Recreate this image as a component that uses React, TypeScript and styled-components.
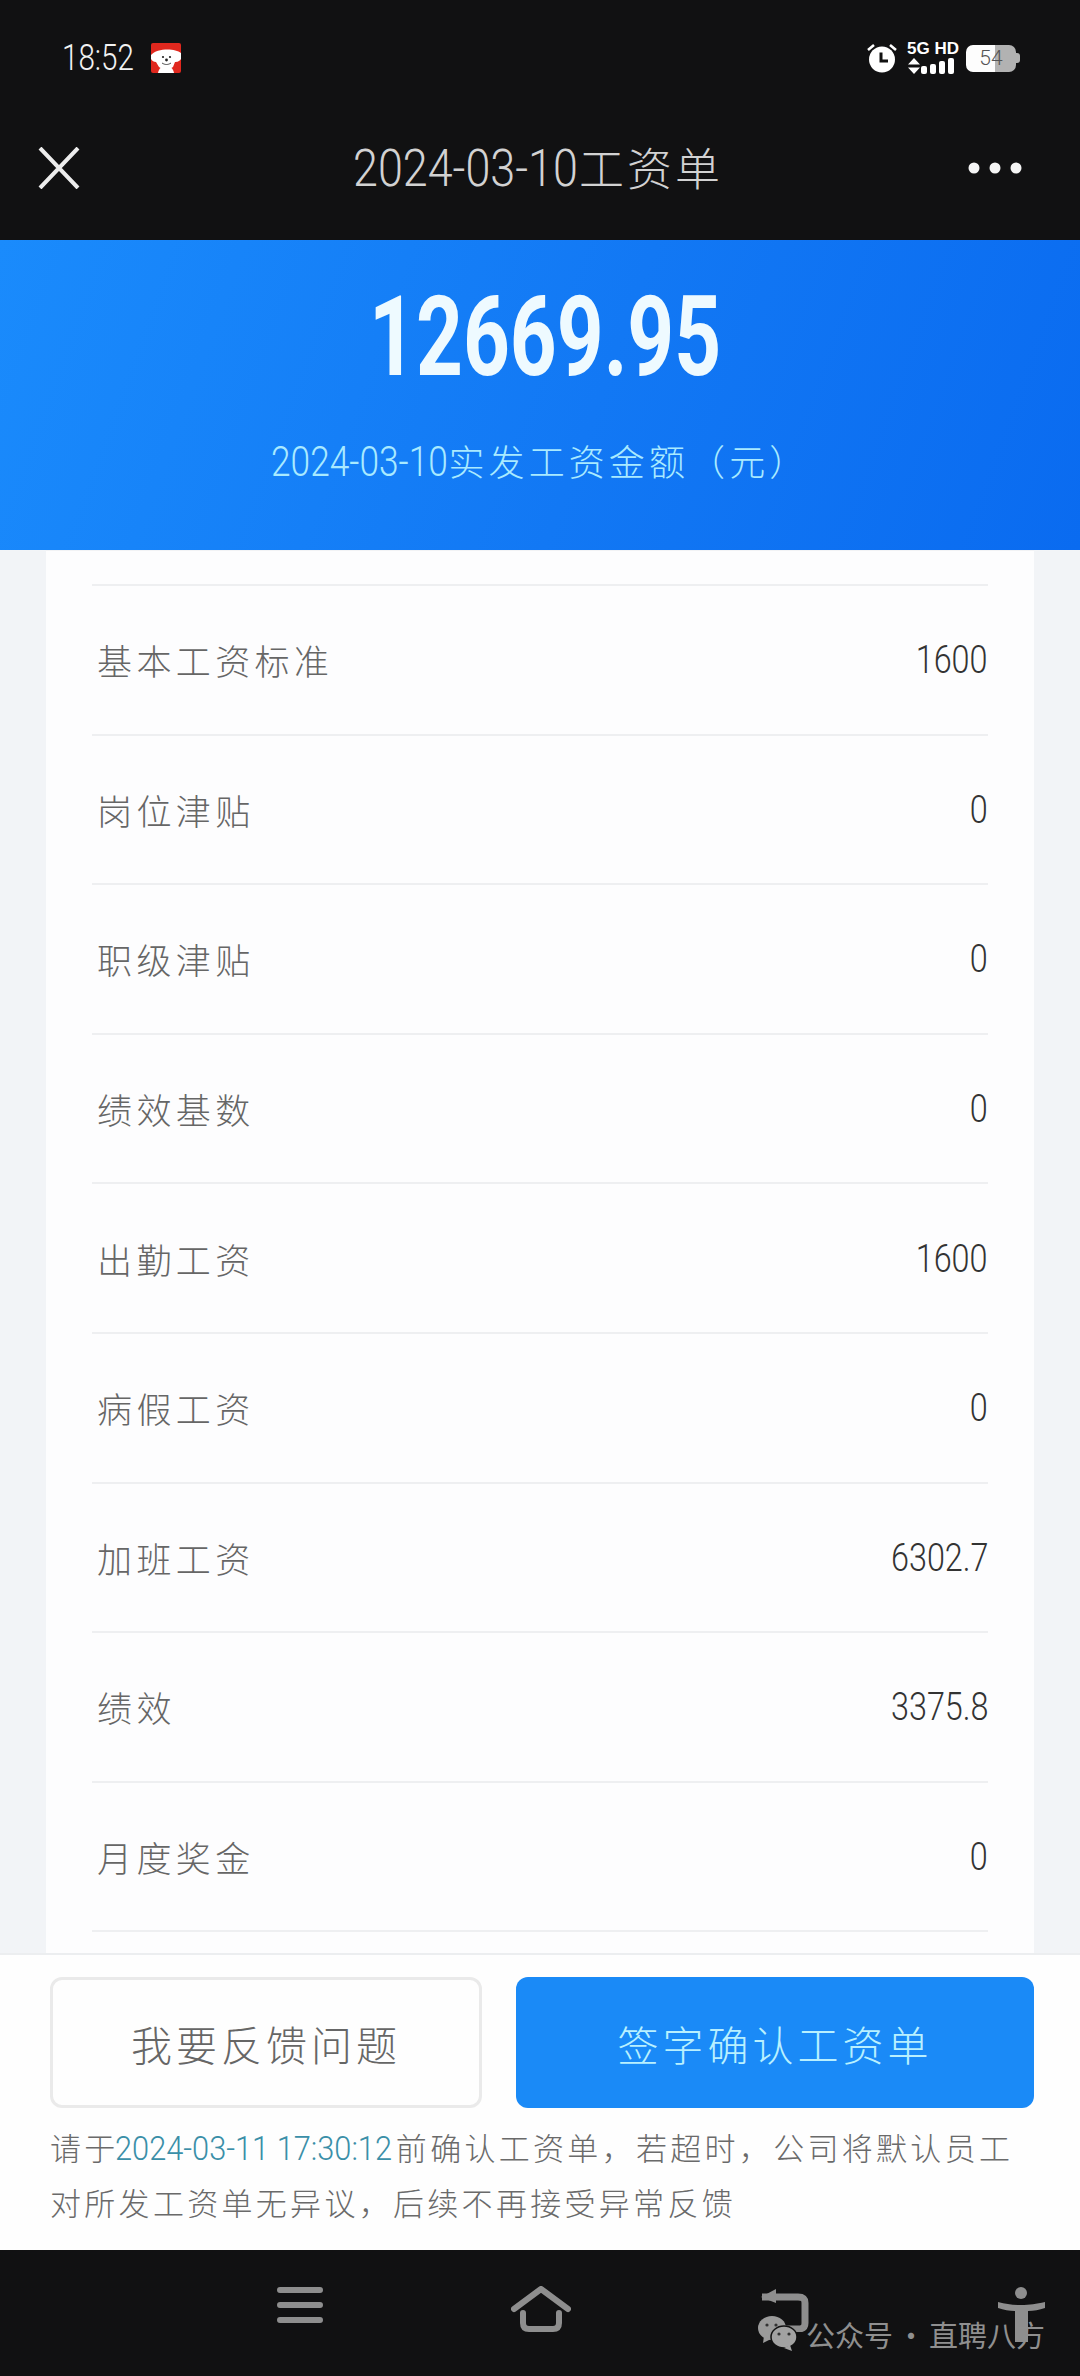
import React from "react";
import styled, { createGlobalStyle } from "styled-components";

const Global = createGlobalStyle`
  html, body { margin: 0; padding: 0; background: #111; }
  * { box-sizing: border-box; }
`;

const CJK = `"Noto Sans CJK SC", "Noto Sans", sans-serif`;
const NUM = `Roboto, "Liberation Sans", sans-serif`;

const Phone = styled.div`
  width: 1080px;
  height: 2376px;
  display: flex;
  flex-direction: column;
  overflow: hidden;
  position: relative;
  font-family: ${CJK};
  font-weight: 300;
  background: #f2f4f7;
`;

const TopArea = styled.header`
  height: 240px;
  flex: none;
  background: #111112;
  display: flex;
  flex-direction: column;
`;

const StatusBar = styled.div`
  height: 116px;
  padding: 43px 60px 0 62px;
  display: flex;
  justify-content: space-between;
  align-items: flex-start;
`;

const StatusLeft = styled.div`
  display: flex;
  align-items: center;
  gap: 15px;
  height: 30px;
`;

/* Digits of the reference are much narrower than any installed face: squeeze them,
   and give the box the squeezed width ($em = natural width in em × scale). */
const Narrow = styled.span<{ $scale: number; $em: number }>`
  display: inline-block;
  font-family: ${NUM};
  font-weight: 300;
  white-space: nowrap;
  width: ${(p) => p.$em * p.$scale}em;
  transform: scaleX(${(p) => p.$scale});
  transform-origin: left center;
`;

const Time = styled(Narrow)`
  font-size: 37px;
  line-height: 30px;
  color: #f2f2f2;
`;

const StatusRight = styled.div`
  display: flex;
  align-items: center;
  height: 30px;
  gap: 9px;
`;

const NetStack = styled.div`
  width: 50px;
  display: flex;
  flex-direction: column;
  gap: 2px;
  margin-top: -2px;
`;

const NetText = styled.span`
  font-family: "Liberation Sans", sans-serif;
  font-weight: 700;
  font-size: 17px;
  line-height: 15px;
  color: #fff;
  white-space: nowrap;
`;

const Battery = styled.div`
  width: 54px;
  height: 27px;
  display: flex;
  align-items: center;
  position: relative;
`;

const BatteryBody = styled.div`
  width: 50px;
  height: 27px;
  border-radius: 7px;
  background: linear-gradient(90deg, #fdfdfd 0 58%, #b2b2b2 58% 100%);
  color: #555;
  font-family: ${NUM};
  font-weight: 300;
  font-size: 21px;
  line-height: 27px;
  text-align: center;
`;

const BatteryTip = styled.div`
  width: 4px;
  height: 10px;
  border-radius: 0 3px 3px 0;
  background: #b2b2b2;
`;

const NavBar = styled.div`
  flex: 1;
  display: flex;
  align-items: flex-start;
  justify-content: space-between;
  padding: 30px 58px 0 38px;
`;

const NavTitle = styled.h1`
  margin: -4px 0 0 28px;
  font-weight: 300;
  font-size: 45px;
  line-height: 50px;
  letter-spacing: 3px;
  color: #d2d2d2;
  white-space: nowrap;
`;

const TitleDate = styled(Narrow)`
  font-size: 51px;
  letter-spacing: 0;
`;

const Hero = styled.section`
  height: 310px;
  flex: none;
  background: linear-gradient(110deg, #1a8bfc 0%, #1278f4 55%, #0a6bf0 100%);
  display: flex;
  flex-direction: column;
  align-items: center;
`;

const Amount = styled.div`
  margin: 40px 0 0 10px;
  font-family: ${NUM};
  font-weight: 700;
  font-size: 112px;
  line-height: 114px;
  color: #eefaff;
  transform: scaleX(0.73);
`;

const HeroSub = styled.div`
  margin-top: 41px;
  font-size: 36px;
  line-height: 50px;
  letter-spacing: 4.1px;
  color: #a9eaff;
  white-space: nowrap;
`;

const HeroDate = styled(Narrow)`
  font-size: 42px;
  letter-spacing: 0;
`;

const Body = styled.main`
  flex: 1;
  min-height: 0;
  padding: 0 46px;
`;

const Card = styled.div`
  height: 100%;
  background: #fdfdfe;
  padding: 33px 46px 0 46px;
  display: flex;
  flex-direction: column;
  border-top: 1px solid #f2f3f5;
`;

const Row = styled.div`
  height: 149.6px;
  flex: none;
  display: flex;
  align-items: center;
  justify-content: space-between;
  border-top: 2px solid #eeeff1;
  padding: 0 0 0 5px;
  &:last-child {
    border-bottom: 2px solid #eeeff1;
    height: 151px;
  }
`;

const RowLabel = styled.span`
  font-size: 35px;
  letter-spacing: 4.4px;
  color: #666;
`;

const RowValue = styled.span`
  display: inline-block;
  font-family: ${NUM};
  font-weight: 300;
  font-size: 39px;
  color: #333;
  margin-top: 1px;
  transform: scaleX(0.83);
  transform-origin: right center;
`;

const Footer = styled.footer`
  height: 297px;
  flex: none;
  background: #fefefe;
  border-top: 2px solid #eceef0;
  padding: 22px 46px 0 50px;
`;

const ButtonRow = styled.div`
  display: flex;
  gap: 34px;
  height: 131px;
`;

const Button = styled.button<{ $primary?: boolean }>`
  border-radius: 12px;
  padding: 0;
  font-family: ${CJK};
  font-weight: 300;
  font-size: 41px;
  letter-spacing: 4px;
  cursor: pointer;
  background: ${(p) => (p.$primary ? "#1a8af7" : "#fefefe")};
  color: ${(p) => (p.$primary ? "#b8f0ff" : "#666")};
  border: ${(p) => (p.$primary ? "none" : "3px solid #eaeaea")};
  width: ${(p) => (p.$primary ? "518px" : "432px")};
`;

const Notice = styled.p`
  margin: 12px 0 0;
  font-size: 31px;
  line-height: 53px;
  letter-spacing: 3.3px;
  color: #6a6a6a;
  white-space: nowrap;
`;

const NoticeDate = styled(Narrow)`
  margin-left: -4px;
  font-size: 34px;
  letter-spacing: 0;
  color: #3a8fa8;
`;

const BottomBar = styled.nav`
  height: 126px;
  flex: none;
  background: #111112;
  display: flex;
  align-items: flex-start;
  padding: 38px 33px 0 277px;
  justify-content: space-between;
`;

const Watermark = styled.div`
  position: absolute;
  left: 757px;
  top: 2316px;
  display: flex;
  align-items: center;
  gap: 7px;
  color: #8f8f8f;
  font-size: 29px;
  line-height: 34px;
  font-weight: 400;
  word-spacing: -3px;
  white-space: nowrap;
`;

const Mascot = () => (
  <svg width="30" height="30" viewBox="0 0 30 30">
    <rect width="30" height="30" rx="2" fill="#e0281e" />
    <path d="M0 12c6-7 24-7 30-2v6c-2 3-5 3-6 3l-2 5c-4 3-10 3-14 0l-3-5c-2 0-4-1-5-3z" fill="#fff" />
    <path d="M7 30c1-5 4-7 8-7s7 2 8 7z" fill="#fff" />
    <circle cx="12" cy="14" r="1.1" fill="#222" />
    <circle cx="19" cy="14" r="1.1" fill="#222" />
    <circle cx="15.5" cy="17" r="1.4" fill="#222" />
    <path d="M11 20c3 2 6 2 9 0" stroke="#222" strokeWidth="0.8" fill="none" />
  </svg>
);

const Alarm = () => (
  <svg width="32" height="30" viewBox="0 0 32 30">
    <circle cx="16" cy="16.5" r="13" fill="#fff" />
    <path d="M2 7l6-5M30 7l-6-5" stroke="#fff" strokeWidth="2.6" />
    <path d="M15 9.5v8.5h7" stroke="#111" strokeWidth="3" fill="none" />
  </svg>
);

const Signal = () => (
  <svg width="50" height="16" viewBox="0 0 50 16">
    <path d="M1 6.5L7 0l6 6.5zM1 9.5L7 16l6-6.5z" fill="#fff" />
    <rect x="14" y="8" width="6" height="8" rx="2" fill="#fff" />
    <rect x="23" y="6" width="6" height="10" rx="2" fill="#fff" />
    <rect x="32" y="3" width="6" height="13" rx="2" fill="#fff" />
    <rect x="41" y="0" width="6" height="16" rx="2" fill="#fff" />
  </svg>
);

const CloseIcon = () => (
  <svg width="42" height="42" viewBox="0 0 42 42" style={{ marginTop: 1 }}>
    <path d="M2 1l38 40M40 1L2 41" stroke="#ededed" strokeWidth="4" fill="none" />
  </svg>
);

const DotsIcon = () => (
  <svg width="54" height="12" viewBox="0 0 54 12" style={{ marginTop: 16 }}>
    <circle cx="6" cy="6" r="5.5" fill="#f5f5f5" />
    <circle cx="27" cy="6" r="5.5" fill="#f5f5f5" />
    <circle cx="48" cy="6" r="5.5" fill="#f5f5f5" />
  </svg>
);

const MenuIcon = () => (
  <svg width="46" height="38" viewBox="0 0 46 38" style={{ marginTop: -2 }}>
    <path d="M3 4h40M3 19h40M3 34h40" stroke="#8e8e8e" strokeWidth="6" strokeLinecap="round" />
  </svg>
);

const HomeIcon = () => (
  <svg width="60" height="46" viewBox="0 0 60 46" style={{ marginTop: -2 }}>
    <path d="M3 23L30 3l27 20" stroke="#8e8e8e" strokeWidth="6" strokeLinecap="round" strokeLinejoin="round" fill="none" />
    <path d="M12 27v10c0 4 2 6 6 6h24c4 0 6-2 6-6V27" stroke="#8e8e8e" strokeWidth="6" strokeLinecap="round" fill="none" />
  </svg>
);

const BackIcon = () => (
  <svg width="50" height="46" viewBox="0 0 50 46" style={{ marginTop: -2 }}>
    <path d="M3 11h36c5 0 7 2 7 6v20c0 4-2 6-7 6H20" stroke="#8e8e8e" strokeWidth="7" strokeLinejoin="round" fill="none" />
    <path d="M2 11L17 3v14z" fill="#8e8e8e" />
  </svg>
);

const PersonIcon = () => (
  <svg width="50" height="56" viewBox="0 0 50 56" style={{ marginTop: -2 }}>
    <circle cx="24" cy="7" r="6" fill="#8e8e8e" />
    <path d="M1 16c8 2 14 3 23 3s15-1 24-3v6c-6 2-11 3-17 3v31H18V25c-6 0-11-1-17-3z" fill="#8e8e8e" />
  </svg>
);

const WeChatIcon = () => (
  <svg width="42" height="36" viewBox="0 0 42 36">
    <ellipse cx="15" cy="12" rx="14" ry="12" fill="#9a9a9a" />
    <path d="M7 20l-1 7 8-4z" fill="#9a9a9a" />
    <ellipse cx="27" cy="21" rx="13" ry="11" fill="#a2a2a2" stroke="#111" strokeWidth="1.5" />
    <path d="M33 29l2 6-8-3z" fill="#a2a2a2" />
    <circle cx="10" cy="9" r="1.6" fill="#333" />
    <circle cx="19" cy="9" r="1.6" fill="#333" />
    <circle cx="22" cy="18" r="1.6" fill="#333" />
    <circle cx="32" cy="18" r="1.6" fill="#333" />
  </svg>
);

const rows: [string, string][] = [
  ["基本工资标准", "1600"],
  ["岗位津贴", "0"],
  ["职级津贴", "0"],
  ["绩效基数", "0"],
  ["出勤工资", "1600"],
  ["病假工资", "0"],
  ["加班工资", "6302.7"],
  ["绩效", "3375.8"],
  ["月度奖金", "0"],
];

export default function App() {
  return (
    <>
      <Global />
      <Phone>
        <TopArea>
          <StatusBar>
            <StatusLeft>
              <Time $scale={0.8} $em={2.5}>18:52</Time>
              <Mascot />
            </StatusLeft>
            <StatusRight>
              <Alarm />
              <NetStack>
                <NetText>5G HD</NetText>
                <Signal />
              </NetStack>
              <Battery>
                <BatteryBody>54</BatteryBody>
                <BatteryTip />
              </Battery>
            </StatusRight>
          </StatusBar>
          <NavBar>
            <CloseIcon />
            <NavTitle>
              <TitleDate $scale={0.88} $em={5.04}>2024-03-10</TitleDate>工资单
            </NavTitle>
            <DotsIcon />
          </NavBar>
        </TopArea>
        <Hero>
          <Amount>12669.95</Amount>
          <HeroSub>
            <HeroDate $scale={0.84} $em={5.04}>2024-03-10</HeroDate>实发工资金额（元）
          </HeroSub>
        </Hero>
        <Body>
          <Card>
            {rows.map(([label, value]) => (
              <Row key={label}>
                <RowLabel>{label}</RowLabel>
                <RowValue>{value}</RowValue>
              </Row>
            ))}
          </Card>
        </Body>
        <Footer>
          <ButtonRow>
            <Button>我要反馈问题</Button>
            <Button $primary>签字确认工资单</Button>
          </ButtonRow>
          <Notice>
            请于<NoticeDate $scale={0.905} $em={9.14}>2024-03-11 17:30:12</NoticeDate>前确认工资单，若超时，公司将默认员工
            <br />
            对所发工资单无异议，后续不再接受异常反馈
          </Notice>
        </Footer>
        <BottomBar>
          <MenuIcon />
          <HomeIcon />
          <BackIcon />
          <PersonIcon />
        </BottomBar>
        <Watermark>
          <WeChatIcon />
          公众号 · 直聘八方
        </Watermark>
      </Phone>
    </>
  );
}
